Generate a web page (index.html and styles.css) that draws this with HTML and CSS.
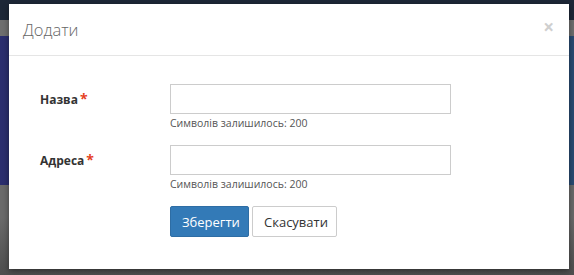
FILE: index.html
```html
<!DOCTYPE html>
<html lang="uk">
<head>
    <meta charset="UTF-8">
    <meta name="viewport" content="width=device-width, initial-scale=1.0">
    <title>Додати</title>
    <link rel="stylesheet" href="styles.css">
</head>
<body>

<div class="page">
    <div class="topbar"></div>
    <div class="strip"></div>
    <div class="hero"></div>
    <div class="lower"></div>
</div>

<div class="modal">
    <div class="modal-header">
        <h4 class="modal-title">Додати</h4>
        <span class="close">×</span>
    </div>
    <form class="modal-body">
        <div class="form-row">
            <label class="form-label">Назва<span class="req">*</span></label>
            <div class="field">
                <input type="text" class="form-input">
                <div class="help">Символів залишилось: 200</div>
            </div>
        </div>
        <div class="form-row">
            <label class="form-label">Адреса<span class="req">*</span></label>
            <div class="field">
                <input type="text" class="form-input">
                <div class="help">Символів залишилось: 200</div>
            </div>
        </div>
        <div class="actions">
            <button type="button" class="btn btn-primary">Зберегти</button>
            <button type="button" class="btn btn-default">Скасувати</button>
        </div>
    </form>
</div>

</body>
</html>
```

FILE: styles.css
```css
body {
    font-family: "Open Sans", "Liberation Sans", sans-serif;
    margin: 0;
    padding: 0;
    width: 574px;
    height: 275px;
    overflow: hidden;
    background-color: #4b4b4b;
}
.page {
    display: flex;
    flex-direction: column;
    height: 275px;
}
.topbar {
    height: 20px;
    background-color: #1d2737;
}
.strip {
    height: 16px;
    background-color: #6e6e6e;
}
.hero {
    height: 149px;
    background: linear-gradient(90deg, #2b2e6e, #2a4b72);
}
.lower {
    flex: 1;
    background: linear-gradient(180deg, #6a6a6a, #4e4e4e);
    border-top: 32px solid #6a6a6a;
}
.modal {
    position: absolute;
    left: 9px;
    top: 4px;
    width: 560px;
    height: 265px;
    background-color: #fff;
    box-shadow: 0 2px 6px rgba(0, 0, 0, 0.45);
}
.modal-header {
    display: flex;
    justify-content: space-between;
    padding: 16px 15px 15px 14px;
    border-bottom: 1px solid #e5e5e5;
}
.modal-title {
    margin: 0;
    font-size: 16.5px;
    font-weight: 300;
    line-height: 20px;
    color: #666;
}
.close {
    font-size: 19px;
    font-weight: bold;
    line-height: 1;
    color: #cfcfcf;
    margin-top: -2px;
}
.modal-body {
    padding: 28px 0 32px 31px;
    margin: 0;
}
.form-row {
    display: flex;
    margin-bottom: 14px;
}
.form-label {
    width: 130px;
    height: 30px;
    line-height: 30px;
    font-size: 12px;
    font-weight: bold;
    color: #333;
}
.req {
    color: #e5411f;
    font-size: 14px;
    margin-left: 2px;
}
.field {
    width: 281px;
}
.form-input {
    display: block;
    box-sizing: border-box;
    width: 281px;
    height: 30px;
    margin: 0;
    border: 1px solid #ccc;
    border-radius: 0;
    font-family: inherit;
}
.help {
    margin-top: 2px;
    font-size: 10.5px;
    line-height: 15px;
    color: #555;
}
.actions {
    display: flex;
    gap: 3px;
    margin-left: 130px;
}
.btn {
    box-sizing: border-box;
    height: 31px;
    padding: 0 11px;
    font-family: inherit;
    font-size: 13px;
    border-radius: 2px;
    border: 1px solid;
    cursor: pointer;
}
.btn-primary {
    width: 79px;
    background-color: #337ab7;
    border-color: #2e6da4;
    color: #fff;
}
.btn-default {
    width: 85px;
    background-color: #fff;
    border-color: #ccc;
    color: #333;
}
```
